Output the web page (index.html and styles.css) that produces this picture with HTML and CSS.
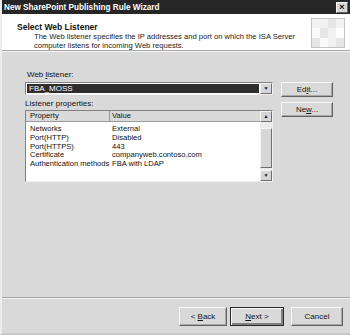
FILE: index.html
```html
<!DOCTYPE html>
<html lang="en">
<head>
    <meta charset="UTF-8">
    <title>New SharePoint Publishing Rule Wizard</title>
    <link rel="stylesheet" href="styles.css">
</head>
<body>
    <div class="window">
        <!-- 标题栏 -->
        <div class="titlebar">
            <span class="title">New SharePoint Publishing Rule Wizard</span>
            <span class="close">×</span>
        </div>

        <!-- 向导页头 -->
        <div class="header">
            <div class="header-text">
                <div class="page-title">Select Web Listener</div>
                <div class="page-desc">The Web listener specifies the IP addresses and port on which the ISA Server<br>computer listens for incoming Web requests.</div>
            </div>
            <div class="header-icon">
                <span></span><span></span><span></span><span></span>
                <span></span><span></span><span></span><span></span>
                <span></span><span></span><span></span><span></span>
            </div>
        </div>

        <!-- 内容 -->
        <div class="content">
            <div class="left-col">
                <div class="label">Web <u>l</u>istener:</div>
                <div class="combo">
                    <div class="combo-value">FBA_MOSS</div>
                    <div class="arrow-btn">&#9660;</div>
                </div>
                <div class="label label-list">Listener properties:</div>
                <div class="listbox">
                    <div class="list-body">
                        <div class="list-head">
                            <div class="col-prop">Property</div>
                            <div class="col-val">Value</div>
                        </div>
                        <div class="list-rows">
                            <div class="row"><div class="col-prop">Networks</div><div class="col-val">External</div></div>
                            <div class="row"><div class="col-prop">Port(HTTP)</div><div class="col-val">Disabled</div></div>
                            <div class="row"><div class="col-prop">Port(HTTPS)</div><div class="col-val">443</div></div>
                            <div class="row"><div class="col-prop">Certificate</div><div class="col-val">companyweb.contoso.com</div></div>
                            <div class="row"><div class="col-prop">Authentication methods</div><div class="col-val">FBA with LDAP</div></div>
                        </div>
                    </div>
                    <div class="scrollbar">
                        <div class="arrow-btn">&#9650;</div>
                        <div class="track"><div class="thumb"></div></div>
                        <div class="arrow-btn">&#9660;</div>
                    </div>
                </div>
            </div>
            <div class="right-col">
                <button class="btn">Ed<u>i</u>t...</button>
                <button class="btn">Ne<u>w</u>...</button>
            </div>
        </div>

        <!-- 底部按钮 -->
        <div class="footer">
            <button class="btn btn-wide">&lt; <u>B</u>ack</button>
            <button class="btn btn-wide btn-default"><u>N</u>ext &gt;</button>
            <button class="btn btn-wide btn-cancel">Cancel</button>
        </div>
    </div>
</body>
</html>
```

FILE: styles.css
```css
body, html {
    margin: 0;
    padding: 0;
    width: 350px;
    height: 335px;
    font-family: "Liberation Sans", Arial, sans-serif;
    font-size: 8px;
    color: #111;
    background-color: #d9d9d9;
}

.window {
    width: 350px;
    height: 335px;
    display: flex;
    flex-direction: column;
    box-sizing: border-box;
    border-left: 2px solid #ececec;
    border-bottom: 2px solid #c8c8c8;
}

/* 标题栏 */
.titlebar {
    height: 14px;
    background-color: #262626;
    color: white;
    display: flex;
    align-items: center;
    padding: 0 2px 0 2px;
}
.title {
    font-weight: bold;
    font-size: 8.2px;
    flex: 1;
}
.close {
    width: 10px;
    height: 9px;
    background-color: #d6d6d6;
    color: #111;
    border: 1px solid #f4f4f4;
    border-right-color: #666;
    border-bottom-color: #666;
    font-size: 9px;
    line-height: 9px;
    text-align: center;
    font-weight: bold;
}

/* 页头 */
.header {
    height: 36px;
    background-color: white;
    display: flex;
    border-bottom: 1px solid #a8a8a8;
    box-shadow: 0 1px 0 #f4f4f4;
}
.header-text {
    flex: 1;
    padding: 8px 0 0 15px;
}
.page-title {
    font-weight: bold;
    font-size: 8.5px;
    line-height: 10px;
}
.page-desc {
    padding-left: 17px;
    font-size: 7.6px;
    line-height: 9px;
    color: #222;
}
.header-icon {
    width: 32px;
    height: 28px;
    margin: 4px 5px 0 0;
    border: 1px solid #c4c4c4;
    display: grid;
    grid-template-columns: repeat(4, 1fr);
    background-color: #f2f2f2;
}
.header-icon span:nth-child(3n) {
    background-color: #e6e6e6;
}
.header-icon span:nth-child(5n) {
    background-color: #fafafa;
}
.header-icon span:nth-child(8) {
    background-color: white;
}

/* 内容 */
.content {
    flex: 1;
    display: flex;
    padding: 18px 0 0 23px;
    gap: 8px;
    border-bottom: 1px solid #a4a4a4;
    box-shadow: 0 1px 0 #f2f2f2;
}
.left-col {
    width: 248px;
    display: flex;
    flex-direction: column;
}
.label {
    line-height: 11px;
    height: 13px;
    padding-left: 2px;
}
.label-list {
    margin-top: 3px;
    height: 12px;
    padding-left: 0;
}
.combo {
    height: 13px;
    display: flex;
    box-sizing: border-box;
    border: 1px solid #808080;
    border-right-color: #f0f0f0;
    border-bottom-color: #f0f0f0;
    background-color: white;
}
.combo-value {
    flex: 1;
    margin: 1px;
    background-color: #2e2e2e;
    color: white;
    line-height: 9px;
    padding-left: 2px;
}
.arrow-btn {
    width: 12px;
    box-sizing: border-box;
    background-color: #d6d6d6;
    border: 1px solid #f6f6f6;
    border-right-color: #707070;
    border-bottom-color: #707070;
    font-size: 5px;
    line-height: 9px;
    text-align: center;
    color: #111;
}

.listbox {
    height: 72px;
    display: flex;
    box-sizing: border-box;
    border: 1px solid #808080;
    border-right-color: #f0f0f0;
    border-bottom-color: #f0f0f0;
    background-color: white;
}
.list-body {
    flex: 1;
    font-size: 7.6px;
}
.list-head {
    display: flex;
    height: 10px;
    line-height: 10px;
    background-color: #dadada;
    border-bottom: 1px solid #9a9a9a;
}
.list-head .col-prop {
    border-right: 1px solid #9a9a9a;
}
.col-prop {
    width: 84px;
    padding-left: 4px;
    box-sizing: border-box;
    white-space: nowrap;
}
.col-val {
    padding-left: 2px;
    white-space: nowrap;
}
.list-rows {
    padding-top: 3px;
}
.row {
    display: flex;
    height: 8.75px;
    line-height: 8.75px;
}
.scrollbar {
    width: 12px;
    display: flex;
    flex-direction: column;
    background-color: #ececec;
}
.scrollbar .arrow-btn {
    height: 11px;
}
.track {
    flex: 1;
    padding: 6px 0 2px 0;
}
.thumb {
    height: 100%;
    box-sizing: border-box;
    background-color: #d6d6d6;
    border: 1px solid #f6f6f6;
    border-right-color: #707070;
    border-bottom-color: #707070;
}

.right-col {
    padding-top: 13px;
    display: flex;
    flex-direction: column;
    gap: 5px;
}

/* 按钮 */
.btn {
    width: 52px;
    height: 15px;
    padding: 0;
    font-family: "Liberation Sans", Arial, sans-serif;
    font-size: 8px;
    color: #111;
    background-color: #d9d9d9;
    border: 1px solid #f8f8f8;
    border-right-color: #606060;
    border-bottom-color: #606060;
    box-shadow: inset -1px -1px 0 #a8a8a8;
}

.footer {
    height: 35px;
    display: flex;
    justify-content: flex-end;
    align-items: flex-start;
    padding: 9px 7px 0 0;
    box-sizing: border-box;
    gap: 3px;
}
.btn-wide {
    width: 48px;
    height: 19px;
}
.btn-default {
    width: 54px;
    border: 1px solid #2a2a2a;
    box-shadow: inset 1px 1px 0 #f8f8f8, inset -2px -2px 0 #808080;
}
.btn-cancel {
    width: 52px;
    margin-left: 4px;
}
```
